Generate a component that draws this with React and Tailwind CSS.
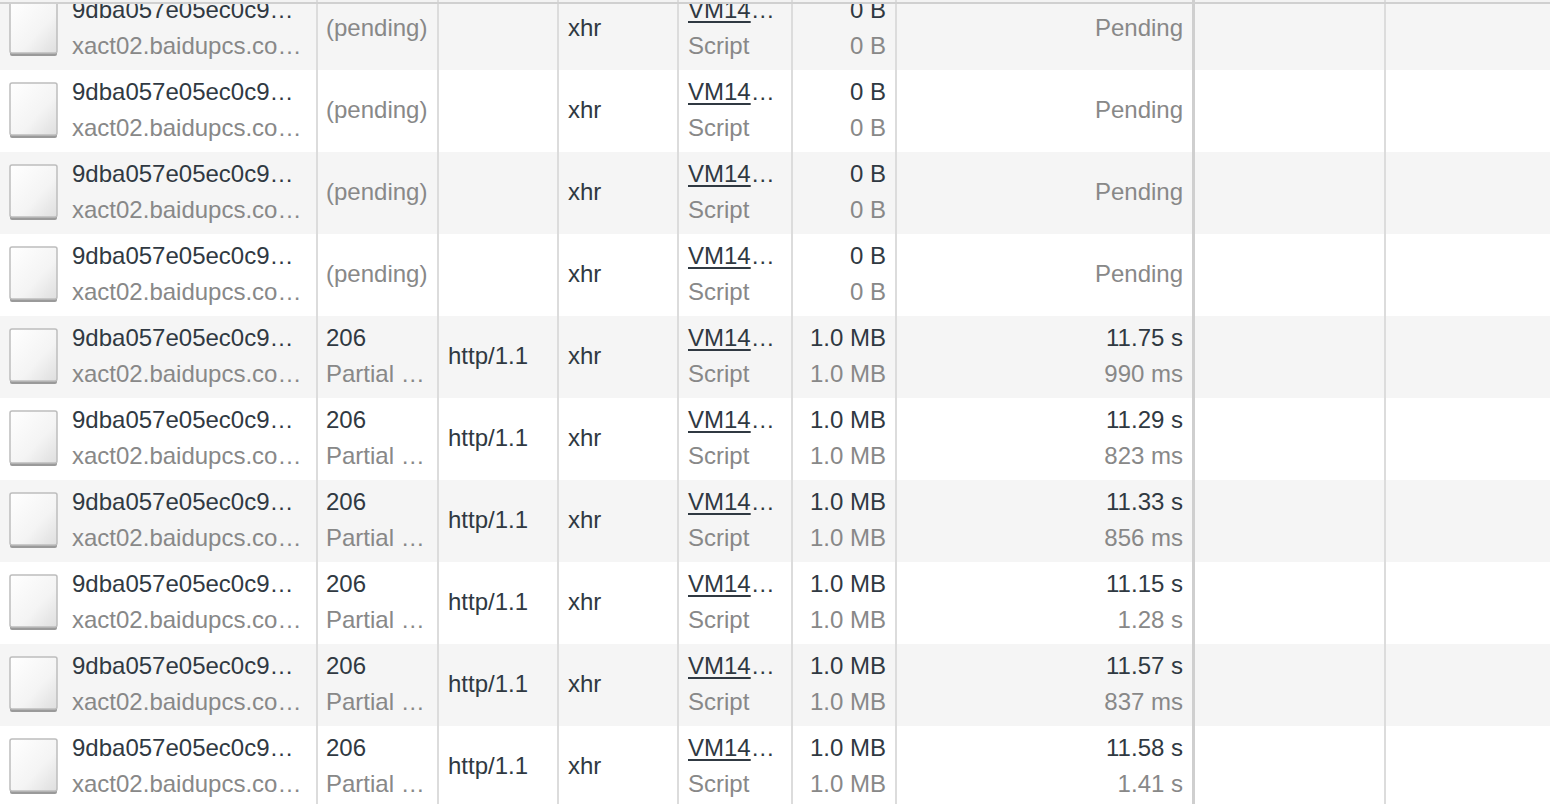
import React from "react";

const rows = [
  { pending: true },
  { pending: true },
  { pending: true },
  { pending: true },
  { time: "11.75 s", latency: "990 ms" },
  { time: "11.29 s", latency: "823 ms" },
  { time: "11.33 s", latency: "856 ms" },
  { time: "11.15 s", latency: "1.28 s" },
  { time: "11.57 s", latency: "837 ms" },
  { time: "11.58 s", latency: "1.41 s" },
];

const FileIcon = () => (
  <svg width="50" height="58" viewBox="0 0 50 58" className="shrink-0">
    <defs>
      <linearGradient id="fileFill" x1="0" y1="0" x2="1" y2="1">
        <stop offset="0" stopColor="#ffffff" />
        <stop offset="0.6" stopColor="#f4f4f4" />
        <stop offset="1" stopColor="#dedede" />
      </linearGradient>
    </defs>
    <rect x="1" y="4" width="47" height="52" rx="2" fill="#9a9a9a" />
    <rect x="1" y="1" width="47" height="52" rx="2" fill="url(#fileFill)" stroke="#bdbdbd" strokeWidth="1.5" />
  </svg>
);

const Cell = ({ className = "", children }) => (
  <div className={`shrink-0 h-full border-r-2 border-[#dcdcdc] flex flex-col justify-center ${className}`}>
    {children}
  </div>
);

const Line = ({ muted, className = "", children }) => (
  <div className={`h-9 leading-9 whitespace-nowrap -translate-y-px ${muted ? "text-[#888888]" : "text-[#303942]"} ${className}`}>
    {children}
  </div>
);

const Row = ({ row, index }) => {
  const bg = index % 2 === 0 ? "bg-[#f5f5f5]" : "bg-white";
  return (
    <div className={`flex h-[82px] ${bg}`}>
      <Cell className="w-[318px] !flex-row items-center justify-start pl-[9px]">
        <FileIcon />
        <div className="ml-[13px] flex flex-col">
          <Line>9dba057e05ec0c9…</Line>
          <Line muted>xact02.baidupcs.co…</Line>
        </div>
      </Cell>
      <Cell className="w-[121px] pl-2">
        {row.pending ? (
          <Line muted>(pending)</Line>
        ) : (
          <>
            <Line>206</Line>
            <Line muted>Partial …</Line>
          </>
        )}
      </Cell>
      <Cell className="w-[120px] pl-[9px]">
        {!row.pending && <Line>http/1.1</Line>}
      </Cell>
      <Cell className="w-[120px] pl-[9px]">
        <Line>xhr</Line>
      </Cell>
      <Cell className="w-[114px] pl-[9px]">
        <Line>
          <span className="underline decoration-2 underline-offset-[3px]">VM14</span>…
        </Line>
        <Line muted>Script</Line>
      </Cell>
      <Cell className="w-[104px] pr-[9px] items-end">
        <Line>{row.pending ? "0 B" : "1.0 MB"}</Line>
        <Line muted>{row.pending ? "0 B" : "1.0 MB"}</Line>
      </Cell>
      <Cell className="w-[298px] pr-[9px] items-end !border-r-[3px] !border-[#cfcfcf]">
        {row.pending ? (
          <Line muted>Pending</Line>
        ) : (
          <>
            <Line>{row.time}</Line>
            <Line muted>{row.latency}</Line>
          </>
        )}
      </Cell>
      <Cell className="w-[191px]" />
      <div className="flex-1" />
    </div>
  );
};

export default function App() {
  return (
    <div
      className="w-[1550px] h-[804px] overflow-hidden bg-white text-[24px]"
      style={{ fontFamily: '"Liberation Sans", Arial, Helvetica, sans-serif' }}
    >
      <div className="flex h-[4px] bg-[#f3f3f3] border-b-2 border-[#d0d0d0]">
        <div className="w-[318px] border-r-2 border-[#dcdcdc]" />
        <div className="w-[121px] border-r-2 border-[#dcdcdc]" />
        <div className="w-[120px] border-r-2 border-[#dcdcdc]" />
        <div className="w-[120px] border-r-2 border-[#dcdcdc]" />
        <div className="w-[114px] border-r-2 border-[#dcdcdc]" />
        <div className="w-[104px] border-r-2 border-[#dcdcdc]" />
        <div className="w-[298px] border-r-[3px] border-[#cfcfcf]" />
        <div className="w-[191px] border-r-2 border-[#dcdcdc]" />
      </div>
      <div className="h-[66px] overflow-hidden">
        <div className="-mt-[16px]">
          <Row row={rows[0]} index={0} />
        </div>
      </div>
      {rows.slice(1).map((row, i) => (
        <Row key={i} row={row} index={i + 1} />
      ))}
    </div>
  );
}
